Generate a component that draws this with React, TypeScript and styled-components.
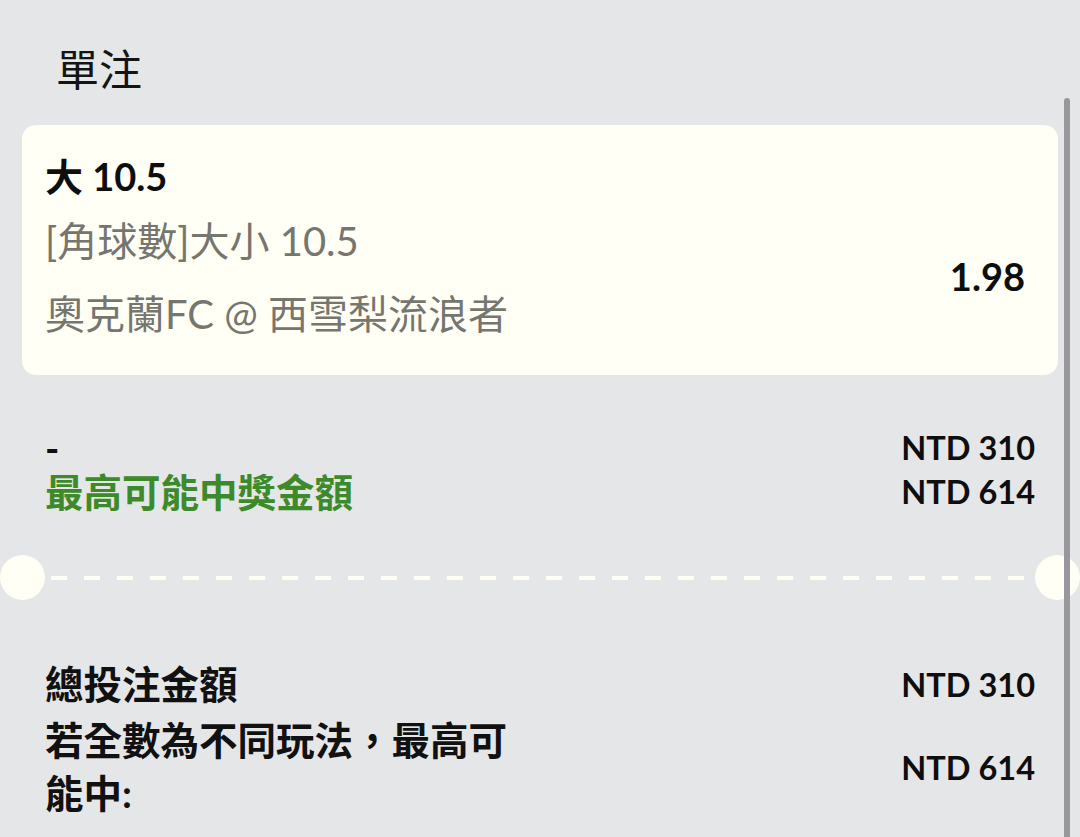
import React from "react";
import styled, { createGlobalStyle } from "styled-components";

const FONT = `"Lato", "Noto Sans CJK TC", "Noto Sans CJK SC", sans-serif`;
const CREAM = "#fffff6";

const Global = createGlobalStyle`
  html, body {
    margin: 0;
    padding: 0;
    background: #e5e6e8;
  }
  body {
    font-family: ${FONT};
    color: #111111;
  }
`;

const Page = styled.div`
  position: relative;
  width: 1080px;
  height: 837px;
  overflow: hidden;
  background: #e5e6e8;
  font-family: ${FONT};
`;

const Title = styled.h1`
  margin: 40px 0 0 0;
  padding-left: 56px;
  font-size: 43px;
  font-weight: 400;
  line-height: 60px;
  color: #141414;
`;

const Content = styled.div`
  padding: 0 22px;
  margin-top: 25px;
`;

const Card = styled.div`
  height: 250px;
  box-sizing: border-box;
  background: ${CREAM};
  border-radius: 14px;
  padding: 29px 33px 0 23px;
  display: flex;
  flex-direction: column;
`;

const Selection = styled.div`
  font-size: 38px;
  font-weight: 700;
  line-height: 44px;
  color: #0e0e0e;
`;

const CardBody = styled.div`
  display: flex;
  align-items: center;
  margin-top: 7px;
`;

const Details = styled.div`
  flex: 1;
  display: flex;
  flex-direction: column;
`;

const Info = styled.div`
  font-size: 40px;
  font-weight: 400;
  line-height: 73px;
  color: #76766f;
`;

const Odds = styled.div`
  font-size: 38px;
  font-weight: 700;
  color: #0e0e0e;
  margin-bottom: 5px;
`;

const Summary = styled.div<{ $lh: number; $gap: number }>`
  display: grid;
  grid-template-columns: minmax(0, 480px) 1fr;
  align-items: center;
  row-gap: ${(p) => p.$gap}px;
  padding: 0 23px;
  line-height: ${(p) => p.$lh}px;
`;

const Label = styled.div<{ $green?: boolean }>`
  font-size: 38.5px;
  font-weight: 700;
  color: ${(p) => (p.$green ? "#3d8a2a" : "#111111")};
`;

const Amount = styled.div`
  justify-self: end;
  font-size: 32.5px;
  font-weight: 700;
  color: #0e0e0e;
  white-space: nowrap;
`;

const Divider = styled.div`
  display: flex;
  align-items: center;
  margin: 41px -22px 58px -22px;
`;

const Notch = styled.div`
  width: 45px;
  height: 45px;
  border-radius: 50%;
  background: ${CREAM};
  flex: none;
`;

const Dashes = styled.div`
  flex: 1;
  height: 4px;
  margin: 0 6px;
  background: repeating-linear-gradient(
    to right,
    ${CREAM} 0 16px,
    transparent 16px 33px
  );
`;

const ScrollThumb = styled.div`
  position: absolute;
  top: 98px;
  right: 10px;
  bottom: 0;
  width: 6px;
  border-radius: 3px 3px 0 0;
  background: #98989c;
`;

export default function App() {
  return (
    <Page>
      <Global />
      <Title>單注</Title>
      <Content>
        <Card>
          <Selection>大 10.5</Selection>
          <CardBody>
            <Details>
              <Info>[角球數]大小 10.5</Info>
              <Info>奧克蘭FC @ 西雪梨流浪者</Info>
            </Details>
            <Odds>1.98</Odds>
          </CardBody>
        </Card>

        <Summary $lh={44} $gap={0} style={{ marginTop: 51 }}>
          <Label>-</Label>
          <Amount>NTD 310</Amount>
          <Label $green>最高可能中獎金額</Label>
          <Amount>NTD 614</Amount>
        </Summary>

        <Divider>
          <Notch />
          <Dashes />
          <Notch />
        </Divider>

        <Summary $lh={53} $gap={3}>
          <Label>總投注金額</Label>
          <Amount>NTD 310</Amount>
          <Label>若全數為不同玩法，最高可能中:</Label>
          <Amount>NTD 614</Amount>
        </Summary>
      </Content>
      <ScrollThumb />
    </Page>
  );
}
